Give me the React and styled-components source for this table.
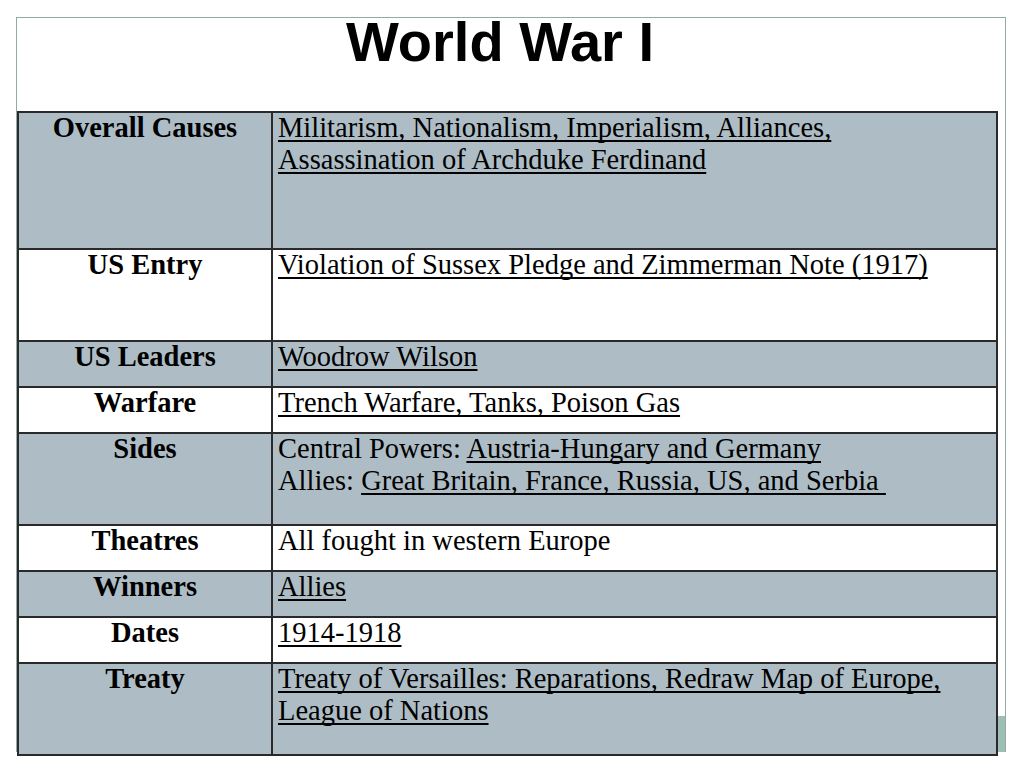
import React from 'react';
import styled, { createGlobalStyle } from 'styled-components';

const GlobalStyle = createGlobalStyle`
  html, body {
    margin: 0;
    padding: 0;
    background: #ffffff;
  }
  body {
    width: 1024px;
    height: 768px;
    overflow: hidden;
  }
`;

// Marco de la diapositiva
const Slide = styled.div`
  width: 1024px;
  height: 768px;
  box-sizing: border-box;
  padding: 17px 18px 0 16px;
`;

const Frame = styled.div`
  position: relative;
  height: 735px;
  box-sizing: border-box;
  border: 1px solid #93aaa6;
  border-bottom: none;
`;

const Title = styled.h1`
  margin: 0;
  height: 93px;
  padding-right: 22px;
  font-family: "Liberation Sans", Arial, sans-serif;
  font-size: 56px;
  font-weight: bold;
  line-height: 48px;
  text-align: center;
  color: #000;
`;

// Barra decorativa en la esquina
const CornerBar = styled.div`
  position: absolute;
  right: 0;
  bottom: 0;
  width: 8px;
  height: 36px;
  background: #9fbeb4;
`;

const Table = styled.div`
  position: relative;
  z-index: 1;
  width: 981px;
  border-top: 2px solid #2a2a2a;
  border-left: 2px solid #2a2a2a;
  border-right: 2px solid #2a2a2a;
  box-sizing: border-box;
`;

const Row = styled.div`
  display: flex;
  height: ${props => props.$h}px;
  box-sizing: border-box;
  border-bottom: 2px solid #2a2a2a;
  background: ${props => (props.$shade ? '#aebdc5' : '#ffffff')};
`;

const Label = styled.div`
  flex: 0 0 252px;
  border-right: 2px solid #2a2a2a;
  margin-top: -1px;
  font-family: "Liberation Serif", "Times New Roman", serif;
  font-size: 28.5px;
  font-weight: bold;
  line-height: 32px;
  text-align: center;
  color: #000;
`;

const Value = styled.div`
  flex: 1;
  padding-left: 5px;
  margin-top: -1px;
  font-family: "Liberation Serif", "Times New Roman", serif;
  font-size: 28.5px;
  line-height: 32px;
  color: #000;
  white-space: pre-wrap;
`;

const U = styled.span`
  text-decoration: underline;
  text-decoration-skip-ink: none;
  text-underline-offset: 3px;
`;

const rows = [
  {
    label: 'Overall Causes',
    h: 137,
    shade: true,
    value: (
      <>
        <U>Militarism, Nationalism, Imperialism, Alliances,</U>
        <br />
        <U>Assassination of Archduke Ferdinand</U>
      </>
    ),
  },
  {
    label: 'US Entry',
    h: 92,
    value: <U>Violation of Sussex Pledge and Zimmerman Note (1917)</U>,
  },
  { label: 'US Leaders', h: 46, shade: true, value: <U>Woodrow Wilson</U> },
  { label: 'Warfare', h: 46, value: <U>Trench Warfare, Tanks, Poison Gas</U> },
  {
    label: 'Sides',
    h: 92,
    shade: true,
    value: (
      <>
        Central Powers: <U>Austria-Hungary and Germany</U>
        <br />
        Allies: <U>Great Britain, France, Russia, US, and Serbia </U>
      </>
    ),
  },
  { label: 'Theatres', h: 46, value: 'All fought in western Europe' },
  { label: 'Winners', h: 46, shade: true, value: <U>Allies</U> },
  { label: 'Dates', h: 46, value: <U>1914-1918</U> },
  {
    label: 'Treaty',
    h: 92,
    shade: true,
    value: (
      <>
        <U>Treaty of Versailles: Reparations, Redraw Map of Europe,</U>
        <br />
        <U>League of Nations</U>
      </>
    ),
  },
];

const App = () => (
  <>
    <GlobalStyle />
    <Slide>
      <Frame>
        <Title>World War I</Title>
        <Table>
          {rows.map(r => (
            <Row key={r.label} $h={r.h} $shade={r.shade}>
              <Label>{r.label}</Label>
              <Value>{r.value}</Value>
            </Row>
          ))}
        </Table>
        <CornerBar />
      </Frame>
    </Slide>
  </>
);

export default App;
